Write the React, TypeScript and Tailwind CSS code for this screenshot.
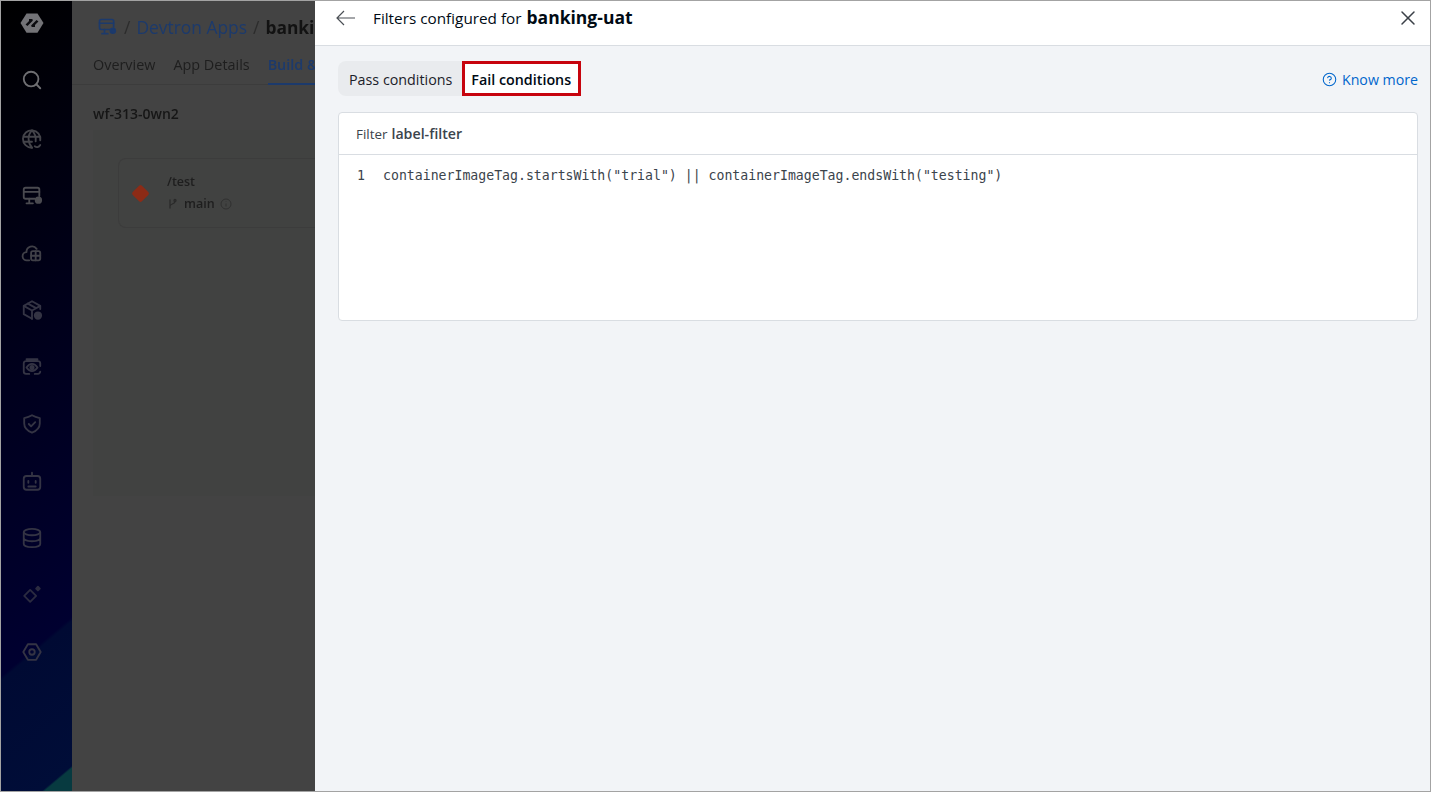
import { X, CircleHelp, Search } from 'lucide-react';
import type { ReactNode } from 'react';

function Glyph({ children, size = 22, className }: { children: ReactNode; size?: number; className?: string }) {
  return (
    <svg width={size} height={size} viewBox="0 0 24 24" fill="none" stroke="currentColor" strokeWidth="2" strokeLinecap="round" strokeLinejoin="round" className={className}>
      {children}
    </svg>
  );
}

function Logo() {
  return (
    <svg width="26" height="22" viewBox="0 0 26 24" fill="none" preserveAspectRatio="none" className="blur-[0.5px]">
      <path d="M7.5 1.5h11l6 10.5-6 10.5h-11L1.500 12z" fill="#737377" />
      <path d="M7.500 14.500l5-5.500h-2.500M18.500 9.500l-5 5.500h2.500" stroke="#0b0b0f" strokeWidth="2.6" strokeLinejoin="round" />
    </svg>
  );
}

const MonitorDot = ({ className, size }: { className?: string; size?: number }) => (
  <Glyph className={className} size={size}>
    <path d="M15 15H5a2 2 0 0 1-2-2V5a2 2 0 0 1 2-2h13a2 2 0 0 1 2 2v7" />
    <path d="M3 7.500h17M9 15v4M6 20h7" />
    <circle cx="19" cy="16.500" r="3" fill="currentColor" />
  </Glyph>
);

const sideIcons: { key: string; tone: string; icon: ReactNode }[] = [
  {
    key: 'globe',
    tone: 'text-[#44444a]',
    icon: (
      <>
        <path d="M21 13.500A9.500 9.500 0 1 0 12 21.500" />
        <path d="M3 9.500h18M3 15h9M12 2.500c-5 5-5 13 0 19M12 2.500c3.500 3.500 4.500 8 4 12" />
        <path d="M15 20c2 1.500 4.500 1 6-1.500" />
      </>
    ),
  },
  { key: 'monitor', tone: 'text-[#4a4a50]', icon: null },
  {
    key: 'cloud',
    tone: 'text-[#404048]',
    icon: (
      <>
        <path d="M9 20H6.500a4.500 4.500 0 0 1-.5-9 6 6 0 0 1 11-3.500" />
        <rect x="11" y="10" width="10" height="10" rx="2" />
        <path d="M11 15h10M16 10v10" />
      </>
    ),
  },
  {
    key: 'package',
    tone: 'text-[#343444]',
    icon: (
      <>
        <path d="M21 11V7.500L12 2.500 3 7.500v9l9 5" />
        <path d="M3 7.500l9 5 9-5M12 12.500v9M7.500 5l9 5" />
        <circle cx="18.500" cy="18" r="3.500" fill="currentColor" />
      </>
    ),
  },
  {
    key: 'scan',
    tone: 'text-[#343444]',
    icon: (
      <>
        <path d="M6 3.500h12M3 11V8a2.500 2.500 0 0 1 2.500-2.500h13A2.500 2.500 0 0 1 21 8v3M3 11v6a2.500 2.500 0 0 0 2.500 2.500H9M15 19.500h3.500A2.500 2.500 0 0 0 21 17" />
        <path d="M6 12.500C8 9.500 10 8.500 12 8.500s4 1 6 4c-2 3-4 4-6 4s-4-1-6-4z" />
        <circle cx="12" cy="12.500" r="1.800" fill="currentColor" />
      </>
    ),
  },
  {
    key: 'shield',
    tone: 'text-[#343444]',
    icon: (
      <>
        <path d="M12 21.500c-5-2-8.500-5-8.500-10V5.500C6.500 5 9.500 4 12 2.500c2.500 1.500 5.500 2.500 8.500 3v6c0 5-3.500 8-8.500 10z" />
        <path d="M8.500 12l2.500 2.500 4.500-4.500" />
      </>
    ),
  },
  {
    key: 'bot',
    tone: 'text-[#343444]',
    icon: (
      <>
        <rect x="3" y="6.500" width="18" height="15" rx="3" />
        <path d="M12 6.500V3M8 12v2M16 12v2M8 18h8" />
      </>
    ),
  },
  {
    key: 'database',
    tone: 'text-[#343444]',
    icon: (
      <>
        <ellipse cx="12" cy="5.500" rx="9" ry="3.500" />
        <path d="M3 5.500v13c0 2 4 3.500 9 3.500s9-1.500 9-3.500v-13M3 12c0 2 4 3.500 9 3.500s9-1.500 9-3.500" />
      </>
    ),
  },
  {
    key: 'sparkle',
    tone: 'text-[#2b2b40]',
    icon: (
      <>
        <path d="M10 6.500l6.500 6.500-6.500 6.500L3.500 13z" />
        <path d="M18.500 3l2 2-2 2-2-2z" fill="currentColor" />
      </>
    ),
  },
  {
    key: 'settings',
    tone: 'text-[#343444]',
    icon: (
      <>
        <path d="M7.500 3.500h9L21.500 12l-5 8.500h-9L2.500 12z" />
        <circle cx="12" cy="12" r="3" />
      </>
    ),
  },
];

function Sidebar() {
  return (
    <aside className="w-[71px] shrink-0 flex flex-col items-center pt-[11px] pr-[9px] bg-[linear-gradient(140deg,#000000_0%,#00001c_45%,#000030_79.5%,#000a33_80%,#000d38_97%,#073a40_97.3%)]">
      <Logo />
      <div className="mt-[35px] flex flex-col items-center gap-[35px] blur-[0.7px]">
        <Search size={22} strokeWidth={2} className="text-[#6f6f73] mb-[2px]" />
        {sideIcons.map((item) =>
          item.key === 'monitor' ? (
            <MonitorDot key={item.key} className={item.tone} />
          ) : (
            <Glyph key={item.key} className={item.tone}>
              {item.icon}
            </Glyph>
          )
        )}
      </div>
    </aside>
  );
}

function BackgroundPage() {
  return (
    <main className="flex-1 min-w-0 overflow-hidden bg-[#434343]">
      <div className="blur-[0.6px]">
        <div className="h-[52px] flex items-center pl-[25px] text-[17.4px] whitespace-nowrap">
          <MonitorDot size={20} className="shrink-0 text-[#1c3a6c] mr-[7px]" />
          <span className="text-[#2c2c2c]">/</span>
          <span className="text-[#1c3a6c] mx-[6px]">Devtron Apps</span>
          <span className="text-[#2c2c2c]">/</span>
          <span className="text-[#121212] font-bold ml-[6px]">banking-uat</span>
        </div>
        <div className="h-[32px] flex gap-[18px] pl-[21px] text-[14.4px] leading-[24px] text-[#1e1e1e] border-b border-[#3c3c3c] whitespace-nowrap">
          <span>Overview</span>
          <span>App Details</span>
          <span className="text-[#1c3a6c] font-semibold border-b-2 border-[#1c3a6c] h-[32px]">Build &amp; Deploy</span>
        </div>
        <div className="pl-[21px] pt-[19px] text-[14px] leading-[19px] font-semibold text-[#161616]">wf-313-0wn2</div>
        <div className="ml-[21px] mt-[7px] h-[366px] bg-[#414241] pl-[25px] pt-[28px]">
          <div className="h-[70px] rounded-l-lg border border-r-0 border-[#3c3c3c] flex items-center pl-[15px] gap-[20px]">
            <div className="w-[13px] h-[13px] rotate-45 rounded-[2px] bg-[#8c2b16]" />
            <div className="text-[12.5px] leading-[22px] text-[#1e1e1e]">
              <div className="font-semibold">/test</div>
              <div className="flex items-center gap-[5px]">
                <svg width="12" height="12" viewBox="0 0 12 12" fill="none" stroke="#2a2a2a" strokeWidth="1.300">
                  <path d="M3 1.500v9M3 8c0-2.500 5-1.500 5-4.500" />
                  <circle cx="8" cy="2.500" r="1" />
                </svg>
                <span className="font-semibold">main</span>
                <svg width="12" height="12" viewBox="0 0 12 12" fill="none" stroke="#303030">
                  <circle cx="6" cy="6" r="5" />
                  <path d="M6 5.500v3M6 3.500v.5" />
                </svg>
              </div>
            </div>
          </div>
        </div>
      </div>
    </main>
  );
}

function Drawer() {
  return (
    <section className="w-[1115px] shrink-0 bg-[#f2f4f7] flex flex-col text-[#000a14]">
      <header className="h-[45px] bg-white border-b border-[#d9dde2] flex items-center pl-[21px] pr-[10px] pb-[12px]">
        <svg width="20" height="16" viewBox="0 0 20 16" fill="none" stroke="#4b4f55" strokeWidth="1.2" className="mt-[2px]">
          <path d="M1 8h18M8 1L1 8l7 7" />
        </svg>
        <h1 className="ml-[17px] text-[15.3px] whitespace-nowrap">
          Filters configured for <span className="ml-[1px] text-[17.5px] font-bold">banking-uat</span>
        </h1>
        <X size={24} strokeWidth={1.5} className="ml-auto mt-[2px] text-[#3b4048]" />
      </header>
      <div className="flex items-center justify-between pl-[23px] pr-[12px] pt-[15px]">
        <div className="flex h-[35px] rounded-lg bg-[#e9ebee]">
          <button className="pl-[11px] pr-[10px] pt-[2px] text-[14.3px] text-[#1b2129]">Pass conditions</button>
          <button className="h-[35px] pl-[6px] pr-[7px] pt-[2px] bg-white border-[3px] border-[#c7040e] text-[14.3px] font-semibold">Fail conditions</button>
        </div>
        <a className="flex items-center gap-[5px] pt-[3px] text-[14.2px] text-[#0066cc]">
          <CircleHelp size={15} strokeWidth={1.7} />
          Know more
        </a>
      </div>
      <div className="ml-[23px] mr-[12px] mt-[16px] h-[209px] bg-white border border-[#d9dde2] rounded-[4px]">
        <div className="h-[42px] pl-[17px] pt-[1px] flex items-center border-b border-[#d9dde2] text-[13.4px] text-[#3b444c]">
          Filter <span className="ml-[4px] text-[14.2px] font-semibold">label-filter</span>
        </div>
        <div className="flex pt-[12px] font-['DejaVu_Sans_Mono',monospace] text-[13.2px] leading-[18px] text-[#3b444c]">
          <span className="w-[44px] pl-[18px] shrink-0">1</span>
          <span className="whitespace-pre">containerImageTag.startsWith("trial") || containerImageTag.endsWith("testing")</span>
        </div>
      </div>
    </section>
  );
}

export default function App() {
  return (
    <div className="w-[1431px] h-[792px] overflow-hidden flex border border-[#a3a3a3] font-['Open_Sans',sans-serif]">
      <Sidebar />
      <BackgroundPage />
      <Drawer />
    </div>
  );
}
